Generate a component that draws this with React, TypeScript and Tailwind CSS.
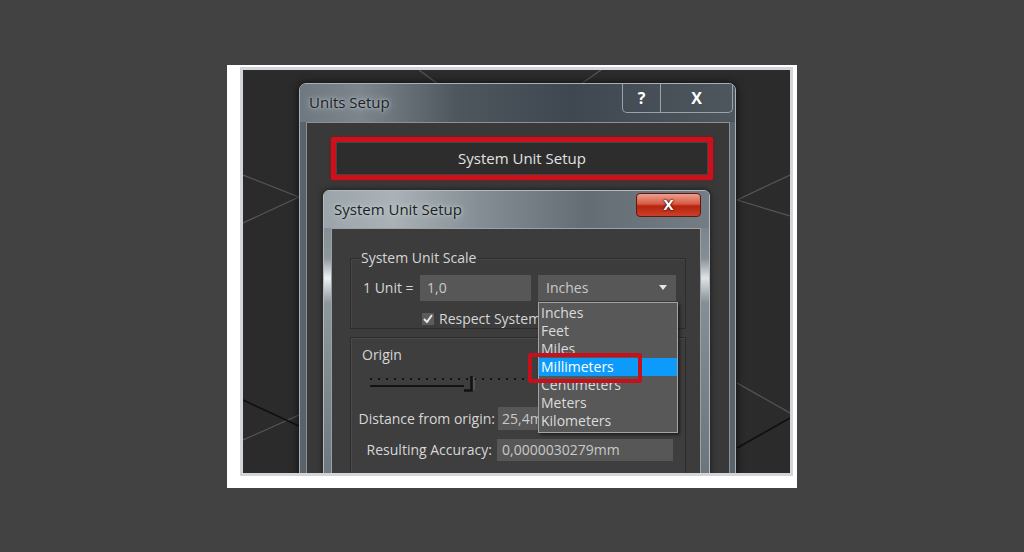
import React from "react";

const units = ["Inches", "Feet", "Miles", "Millimeters", "Centimeters", "Meters", "Kilometers"];

function ViewportLines() {
  return (
    <svg className="absolute inset-0" width="547" height="403" viewBox="0 0 547 403">
      <g stroke="#565656" strokeWidth="1.2" fill="none">
        <line x1="0" y1="105" x2="56" y2="127" />
        <line x1="0" y1="153" x2="56" y2="127" />
        <line x1="0" y1="370" x2="56" y2="345" />
        <line x1="547" y1="105" x2="494" y2="130" />
        <line x1="547" y1="146" x2="494" y2="130" />
        <line x1="547" y1="343" x2="494" y2="313" />
        <line x1="176" y1="0" x2="195" y2="14" />
        <line x1="358" y1="0" x2="338" y2="14" />
      </g>
      <g stroke="#101010" strokeWidth="1.6" fill="none">
        <line x1="0" y1="330" x2="56" y2="356" />
        <line x1="547" y1="348" x2="494" y2="378" />
      </g>
    </svg>
  );
}

function Slider() {
  return (
    <svg width="172" height="18" viewBox="0 0 172 18">
      <line x1="2" y1="5" x2="172" y2="5" stroke="#121212" strokeWidth="2" strokeDasharray="2 6" />
      <line x1="2" y1="12" x2="96" y2="12" stroke="#121212" strokeWidth="2" />
      <path d="M96 16.5 H103.5 V2" stroke="#121212" strokeWidth="2.5" fill="none" />
      <line x1="106" y1="3" x2="106" y2="16" stroke="#6a6a6a" strokeWidth="1" />
    </svg>
  );
}

function UnitDropdown() {
  return (
    <div className="relative h-[26px] w-[138px]">
      <div className="flex h-full items-center justify-between bg-[#575757] pl-[8px] pr-[9px] text-[#c9c9c9]">
        <span>Inches</span>
        <svg width="8" height="5" viewBox="0 0 8 5">
          <path d="M0 0 H8 L4 5 Z" fill="#e6e6e6" />
        </svg>
      </div>
      <div className="absolute left-0 top-[27px] w-[140px] border border-[#a3a3a3] bg-[#585858] pb-[2px] pt-[1px] shadow-[2px_2px_3px_rgba(0,0,0,0.5)]">
        {units.map((u) => (
          <div
            key={u}
            className={
              u === "Millimeters"
                ? "h-[18px] bg-[#0c9bfb] pl-[2px] leading-[18px] text-white"
                : "h-[18px] pl-[2px] leading-[18px] text-[#dcdcdc]"
            }
          >
            {u}
          </div>
        ))}
        <div className="absolute -left-[11px] top-[50px] h-[30px] w-[114px] rounded-[2px] border-[4px] border-[#c3111d]" />
      </div>
    </div>
  );
}

function SystemUnitSetup() {
  return (
    <div className="ml-[16px] mt-[10px] w-[387px] rounded-t-[6px] border border-[#b5bcc1] bg-[#6f787e] shadow-[0_0_6px_rgba(0,0,0,0.6)]">
      <div className="flex h-[37px] items-start justify-between rounded-t-[5px] bg-[linear-gradient(90deg,#9ba4aa_0%,#aab2b7_18%,#858e94_40%,#646d74_68%,#747d83_100%)]">
        <span className="pl-[10px] pt-[7px] text-[15px] text-[#1b1f23] [text-shadow:0_0_8px_#c9d0d4,0_0_3px_#c9d0d4]">
          System Unit Setup
        </span>
        <div className="mr-[8px] mt-[2px] flex h-[24px] w-[65px] items-center justify-center rounded-[4px] border border-[#5e1a12] bg-[linear-gradient(180deg,#eba08f_0%,#d65a44_45%,#b8230f_55%,#c8412a_100%)] text-[15px] font-bold text-white [text-shadow:0_0_2px_#3a0a05,0_0_2px_#3a0a05]">
          X
        </div>
      </div>
      <div className="flex">
        <div className="w-[7px] bg-[linear-gradient(180deg,#858e94_0%,#8e979c_12%,#eef1f2_20%,#8e979c_30%,#6e777d_100%)]" />
        <div className="h-[250px] w-[370px] border border-[#9aa2a7] bg-[#3c3c3c] pl-[18px] pr-[14px] pt-[29px] text-[14px] text-[#d6d6d6]">
          <div className="border border-[#2c2c2c] pb-[3px] shadow-[inset_1px_1px_0_#474747]">
            <div className="-mt-[10px] ml-[9px] h-[18px] w-fit bg-[#3c3c3c] px-[1px] leading-[18px]">System Unit Scale</div>
            <div className="mt-[8px] flex h-[26px] items-center pl-[12px]">
              <span className="w-[57px]">1 Unit =</span>
              <div className="flex h-full w-[111px] items-center bg-[#575757] pl-[7px] text-[#c9c9c9]">1,0</div>
              <div className="ml-[7px]">
                <UnitDropdown />
              </div>
            </div>
            <div className="mt-[12px] flex h-[12px] items-center pl-[71px]">
              <div className="flex h-[12px] w-[12px] items-center justify-center bg-[#5c5c5c]">
                <svg width="10" height="9" viewBox="0 0 10 9">
                  <path d="M1 5 L4 8 L9 1" stroke="#e8e8e8" strokeWidth="2" fill="none" />
                </svg>
              </div>
              <span className="ml-[5px] w-[99px] overflow-hidden whitespace-nowrap">Respect System Units in Files</span>
            </div>
          </div>
          <div className="mt-[8px] h-[140px] border border-[#2c2c2c] bg-[#3e3e3e] shadow-[inset_1px_1px_0_#4a4a4a]">
            <div className="pl-[11px] pt-[8px] leading-[18px]">Origin</div>
            <div className="ml-[17px] mt-[10px] h-[18px]">
              <Slider />
            </div>
            <div className="mt-[15px] flex h-[23px] items-center">
              <span className="w-[144px] text-right">Distance from origin:</span>
              <div className="ml-[3px] flex h-full w-[176px] items-center bg-[#575757] pl-[4px] text-[#c9c9c9]">
                <span className="w-[36px] overflow-hidden whitespace-nowrap">25,4mm</span>
              </div>
            </div>
            <div className="mt-[9px] flex h-[22px] items-center">
              <span className="w-[141px] text-right">Resulting Accuracy:</span>
              <div className="ml-[5px] flex h-full w-[176px] items-center bg-[#575757] pl-[5px] text-[#c9c9c9]">0,0000030279mm</div>
            </div>
          </div>
        </div>
        <div className="w-[8px] bg-[linear-gradient(180deg,#7c858b_0%,#858e94_12%,#dfe3e5_20%,#858e94_30%,#6b747a_100%)]" />
      </div>
    </div>
  );
}

function UnitsSetup() {
  return (
    <div className="w-[437px] rounded-t-[7px] border border-[#a9b1b6] bg-[#5a636a] shadow-[0_0_8px_rgba(0,0,0,0.7)]">
      <div className="flex h-[38px] items-start justify-between rounded-t-[6px] bg-[linear-gradient(90deg,#6f7880_0%,#7c858b_14%,#4e575e_36%,#3f4850_62%,#4e575e_100%)]">
        <span className="pl-[9px] pt-[7px] text-[15px] text-[#1d2126] [text-shadow:0_0_8px_#bfc7cc,0_0_3px_#bfc7cc]">
          Units Setup
        </span>
        <div className="mr-[2px] flex h-[29px] rounded-b-[5px] border border-t-0 border-[#9ba3a9] text-[16px] font-bold text-white">
          <div className="flex w-[38px] items-center justify-center border-r border-[#9ba3a9]">?</div>
          <div className="flex w-[71px] items-center justify-center">X</div>
        </div>
      </div>
      <div className="flex pl-[6px] pr-[5px]">
        <div className="h-[360px] w-[424px] border border-[#8a9298] bg-[#393939] pl-[24px] pt-[14px]">
          <div className="h-[43px] w-[382px] rounded-[2px] border-[5px] border-[#cc111d] bg-[#2d2d2d] shadow-[0_0_3px_#9a0d15]">
            <div className="flex h-full items-center justify-center border border-[#444] text-[15px] text-[#e2e2e2]">
              System Unit Setup
            </div>
          </div>
          <div className="-ml-[24px]">
            <SystemUnitSetup />
          </div>
        </div>
      </div>
    </div>
  );
}

export default function App() {
  return (
    <div className="flex h-[552px] w-[1024px] items-center justify-center bg-[#424242] font-['Open_Sans',sans-serif]">
      <div className="h-[423px] w-[570px] bg-white pb-[12px] pl-[13px] pr-[4px] pt-[2px]">
        <div className="relative h-full overflow-hidden border-[3px] border-[#d2d6da] bg-[#2b2b2b]">
          <ViewportLines />
          <div className="relative pl-[56px] pt-[13px]">
            <UnitsSetup />
          </div>
        </div>
      </div>
    </div>
  );
}
